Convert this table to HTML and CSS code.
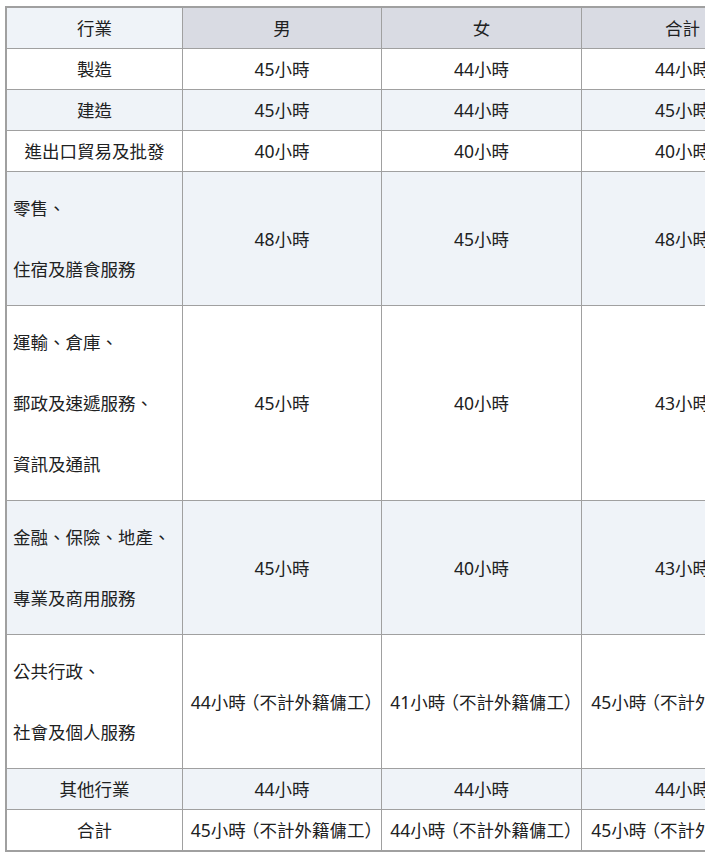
FILE: index.html
```html
<!DOCTYPE html>
<html lang="zh-Hant">
<head>
<meta charset="utf-8">
<title>行業工時</title>
<link rel="stylesheet" href="styles.css">
</head>
<body>
<div class="wrap">
<table class="hours">
  <thead>
    <tr>
      <th class="c1 head-first">行業</th>
      <th class="c2">男</th>
      <th class="c3">女</th>
      <th class="c4">合計</th>
    </tr>
  </thead>
  <tbody>
    <tr>
      <td>製造</td><td>45小時</td><td>44小時</td><td>44小時</td>
    </tr>
    <tr class="alt">
      <td>建造</td><td>45小時</td><td>44小時</td><td>45小時</td>
    </tr>
    <tr>
      <td>進出口貿易及批發</td><td>40小時</td><td>40小時</td><td>40小時</td>
    </tr>
    <tr class="alt">
      <td class="multi"><div class="lines"><span>零售、</span><span>住宿及膳食服務</span></div></td>
      <td>48小時</td><td>45小時</td><td>48小時</td>
    </tr>
    <tr>
      <td class="multi"><div class="lines"><span>運輸、倉庫、</span><span>郵政及速遞服務、</span><span>資訊及通訊</span></div></td>
      <td>45小時</td><td>40小時</td><td>43小時</td>
    </tr>
    <tr class="alt">
      <td class="multi"><div class="lines"><span>金融、保險、地產、</span><span>專業及商用服務</span></div></td>
      <td>45小時</td><td>40小時</td><td>43小時</td>
    </tr>
    <tr>
      <td class="multi"><div class="lines"><span>公共行政、</span><span>社會及個人服務</span></div></td>
      <td class="nw">44小時<span class="op">（</span>不計外籍傭工）</td><td class="nw">41小時<span class="op">（</span>不計外籍傭工）</td><td class="nw">45小時<span class="op">（</span>不計外籍傭工）</td>
    </tr>
    <tr class="alt">
      <td>其他行業</td><td>44小時</td><td>44小時</td><td>44小時</td>
    </tr>
    <tr>
      <td>合計</td><td class="nw">45小時<span class="op">（</span>不計外籍傭工）</td><td class="nw">44小時<span class="op">（</span>不計外籍傭工）</td><td class="nw">45小時<span class="op">（</span>不計外籍傭工）</td>
    </tr>
  </tbody>
</table>
</div>
</body>
</html>
```

FILE: styles.css
```css
html, body {
  margin: 0;
  padding: 0;
  background: #ffffff;
}

body {
  font-family: "Noto Sans", "Noto Sans CJK TC", sans-serif;
  font-size: 17.5px;
  color: #202122;
}

.wrap {
  margin: 6px 0 0 5px;
  width: 700px;
  overflow: hidden;
}

.hours {
  border-collapse: separate;
  border-spacing: 0;
  border: 2px solid #a0a0a0;
  table-layout: fixed;
  width: 776px;
  line-height: 22px;
}

.hours th,
.hours td {
  box-sizing: border-box;
  padding: 9px 6px;
  text-align: center;
  vertical-align: middle;
  font-weight: normal;
  border-left: 1px solid #a0a0a0;
  border-top: 1px solid #a0a0a0;
  white-space: nowrap;
}

.hours th:first-child,
.hours td:first-child {
  border-left: none;
}

.hours thead th {
  border-top: none;
  background: #d9dbe3;
}

.hours thead th.head-first {
  background: #eff3f8;
}

.c1 { width: 175px; }
.c2 { width: 199px; }
.c3 { width: 200px; }
.c4 { width: 202px; }

.hours tr.alt td {
  background: #eff3f8;
}

.hours td.multi {
  text-align: left;
}

.lines {
  display: flex;
  flex-direction: column;
  gap: 39px;
  margin: 16px 0;
}

.nw {
  font-feature-settings: "halt";
}

.op {
  margin-left: 5px;
}
```
